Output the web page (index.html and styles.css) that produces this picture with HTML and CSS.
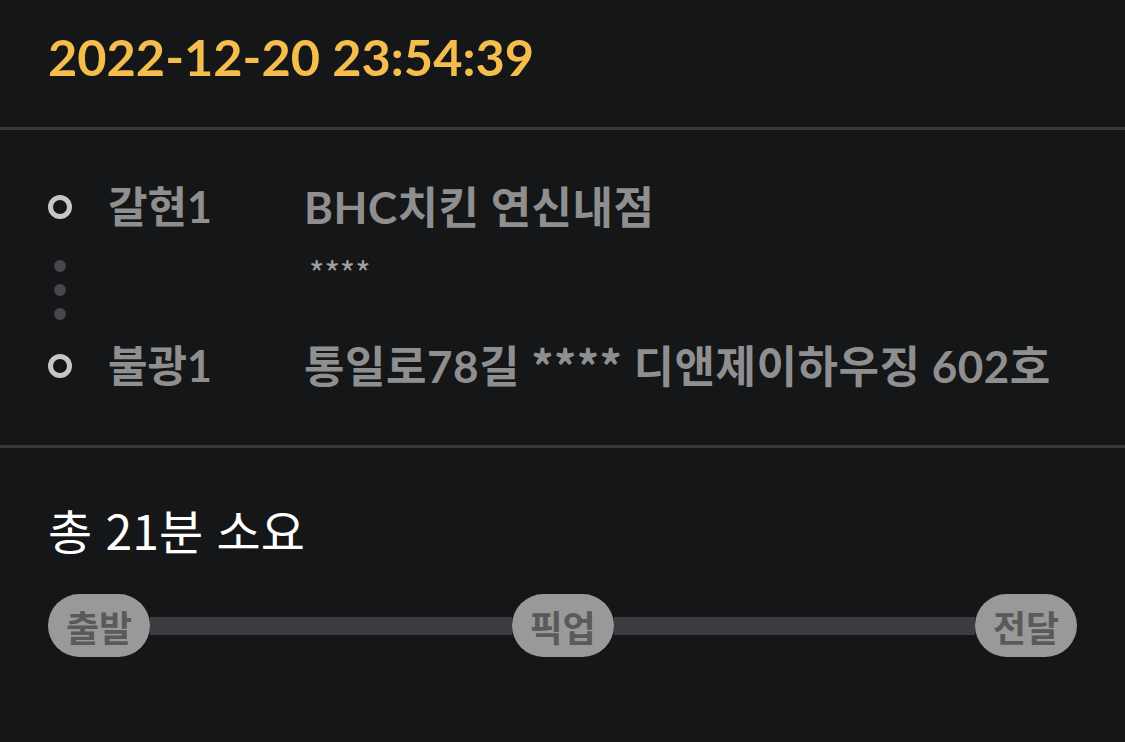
FILE: index.html
```html
<!DOCTYPE html>
<html lang="ko">
<head>
    <meta charset="UTF-8">
    <meta name="viewport" content="width=device-width, initial-scale=1.0">
    <title>배달 상세</title>
    <link rel="stylesheet" href="styles.css">
</head>
<body>
    <div class="header">
        <div class="date">2022-12-20 23:54:39</div>
    </div>

    <div class="route">
        <div class="ring"></div>
        <div class="label">갈현1</div>
        <div class="value">BHC치킨 연신내점</div>

        <div class="dots"><span></span><span></span><span></span></div>
        <div></div>
        <div class="detail">****</div>

        <div class="ring"></div>
        <div class="label">불광1</div>
        <div class="value">통일로78길 <span class="mask">****</span> 디앤제이하우징 602호</div>
    </div>

    <div class="summary">
        <div class="total">총 21분 소요</div>
        <div class="progress">
            <span class="pill">출발</span>
            <span class="track"></span>
            <span class="pill">픽업</span>
            <span class="track"></span>
            <span class="pill">전달</span>
        </div>
    </div>
</body>
</html>
```

FILE: styles.css
```css
body {
    margin: 0;
    background-color: #151618;
    font-family: Lato, "Noto Sans CJK KR", sans-serif;
}
.header {
    padding: 26px 48px 0;
    height: 101px;
    border-bottom: 3px solid #3a3a3c;
}
.date {
    color: #f4bd4c;
    font-size: 50.5px;
    font-weight: bold;
    line-height: 61px;
}
.route {
    display: grid;
    grid-template-columns: 24px 160px 1fr;
    column-gap: 36px;
    padding: 49px 48px 51px;
    border-bottom: 3px solid #3a3a3c;
    color: #8f8f8f;
    font-size: 44px;
    font-weight: bold;
}
.label, .value {
    height: 56px;
    line-height: 56px;
}
.label {
    font-size: 43px;
}
.value {
    letter-spacing: 0.5px;
}
.mask {
    font-family: "Noto Sans CJK KR", sans-serif;
    line-height: 1;
}
.ring {
    align-self: center;
    width: 14px;
    height: 14px;
    border: 5px solid #c6c6c6;
    border-radius: 50%;
}
.dots {
    display: flex;
    flex-direction: column;
    align-items: center;
    gap: 12px;
    padding: 25px 0 18px;
}
.dots span {
    width: 12px;
    height: 12px;
    border-radius: 50%;
    background-color: #47474b;
}
.detail {
    margin-top: 21px;
    color: #a0a0a0;
    font-family: "Noto Sans CJK KR", sans-serif;
    font-size: 33px;
    font-weight: normal;
    line-height: 32px;
    padding-left: 5px;
}
.summary {
    padding: 0 48px;
}
.total {
    margin-top: 53px;
    color: #ffffff;
    font-family: "Noto Sans CJK KR", sans-serif;
    font-size: 48px;
    line-height: 56px;
}
.progress {
    display: flex;
    align-items: center;
    margin-top: 37px;
}
.pill {
    width: 102px;
    height: 63px;
    border-radius: 32px;
    background-color: #999999;
    color: #5a5a5a;
    font-size: 36px;
    font-weight: bold;
    display: flex;
    align-items: center;
    justify-content: center;
}
.track {
    flex: 1;
    height: 18px;
    background-color: #3d3d41;
}
```
